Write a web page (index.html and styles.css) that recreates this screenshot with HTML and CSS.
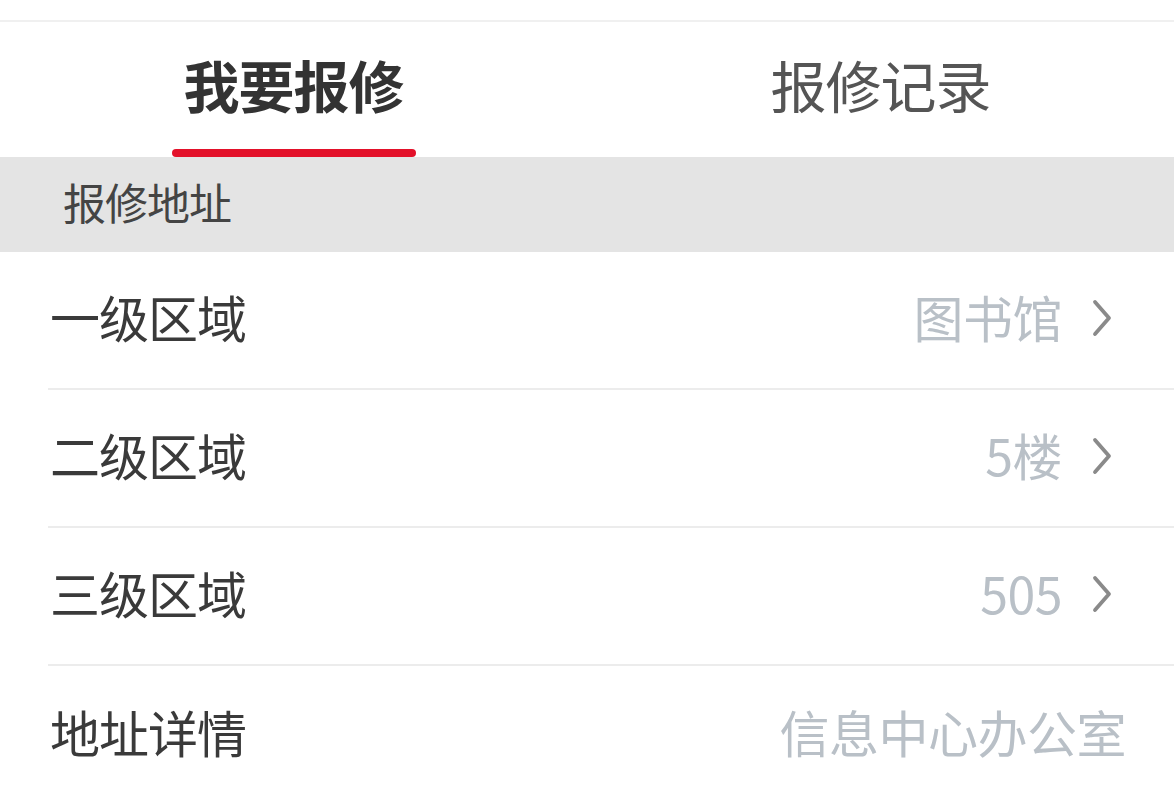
FILE: index.html
```html
<!DOCTYPE html>
<html lang="zh-CN">
<head>
  <meta charset="UTF-8" />
  <meta name="viewport" content="width=device-width, initial-scale=1.0"/>
  <title>报修</title>
  <link rel="stylesheet" href="styles.css">
</head>
<body>

<div class="top-space"></div>

<!-- Tabs -->
<div class="tabs">
  <div class="tab active"><span class="tab-label">我要报修</span></div>
  <div class="tab"><span class="tab-label">报修记录</span></div>
</div>

<div class="section-title">报修地址</div>

<div class="list">
  <div class="row">
    <span class="label">一级区域</span>
    <span class="value">图书馆<span class="chevron"><svg viewBox="0 0 24 38" width="24" height="38"><path d="M5 3 L19 19 L5 35" fill="none" stroke="#8a8a8a" stroke-width="3.8" stroke-linecap="round" stroke-linejoin="round"/></svg></span></span>
  </div>
  <div class="row">
    <span class="label">二级区域</span>
    <span class="value">5楼<span class="chevron"><svg viewBox="0 0 24 38" width="24" height="38"><path d="M5 3 L19 19 L5 35" fill="none" stroke="#8a8a8a" stroke-width="3.8" stroke-linecap="round" stroke-linejoin="round"/></svg></span></span>
  </div>
  <div class="row">
    <span class="label">三级区域</span>
    <span class="value">505<span class="chevron"><svg viewBox="0 0 24 38" width="24" height="38"><path d="M5 3 L19 19 L5 35" fill="none" stroke="#8a8a8a" stroke-width="3.8" stroke-linecap="round" stroke-linejoin="round"/></svg></span></span>
  </div>
  <div class="row last">
    <span class="label">地址详情</span>
    <span class="value plain">信息中心办公室</span>
  </div>
</div>

</body>
</html>
```

FILE: styles.css
```css
body {
  margin: 0;
  background: #fff;
  font-family: "Noto Sans CJK SC", "Noto Sans", sans-serif;
  color: #333;
  overflow: hidden;
}

.top-space {
  height: 20px;
  border-bottom: 2px solid #f0f0f0;
}

.tabs {
  display: flex;
  height: 135px;
}

.tab {
  flex: 1;
  display: flex;
  justify-content: center;
  position: relative;
}

.tab-label {
  font-size: 56px;
  line-height: 1;
  margin-top: 34px;
  color: #555;
  letter-spacing: -1px;
}

.tab.active .tab-label {
  color: #333;
  font-weight: bold;
}

.tab.active::after {
  content: "";
  position: absolute;
  left: 172px;
  width: 244px;
  bottom: 0;
  height: 8px;
  border-radius: 4px;
  background: #e3112a;
}

.section-title {
  background: #e4e4e4;
  height: 95px;
  box-sizing: border-box;
  padding: 0 0 8px 63px;
  display: flex;
  align-items: center;
  font-size: 43px;
  color: #444;
  letter-spacing: -1px;
}

.list {
  padding-left: 48px;
}

.row {
  height: 138px;
  box-sizing: border-box;
  display: flex;
  align-items: center;
  justify-content: space-between;
  border-bottom: 2px solid #ececec;
  padding: 0 60px 8px 0;
}

.row.last {
  border-bottom: none;
  padding-right: 48px;
}

.label {
  font-size: 50px;
  color: #3a3a3a;
  padding-left: 2px;
  letter-spacing: -1px;
}

.value {
  display: flex;
  align-items: center;
  font-size: 50px;
  color: #b9c0c7;
  letter-spacing: -0.5px;
}

.chevron {
  display: flex;
  margin-left: 28px;
  margin-top: 4px;
}
```
